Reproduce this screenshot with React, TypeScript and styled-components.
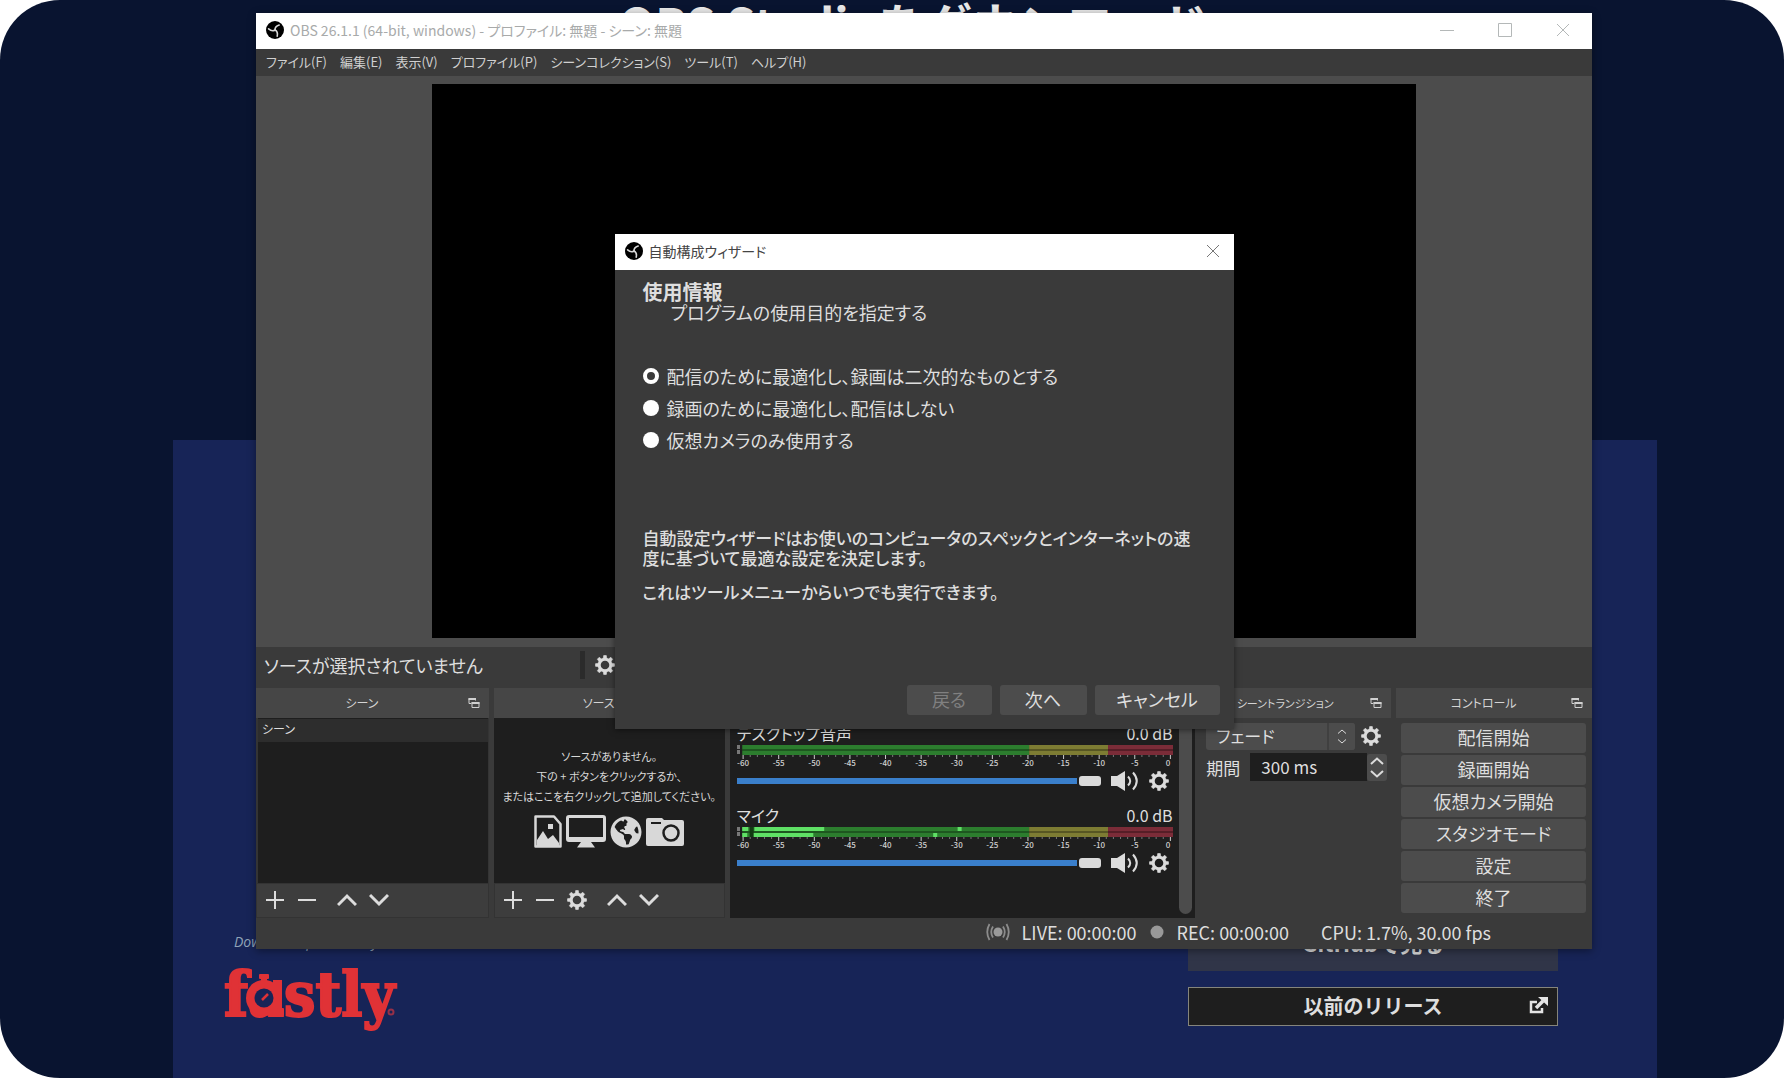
import React, { useState } from "react";
import styled, { createGlobalStyle, css } from "styled-components";
import { FaGlobeAmericas } from "react-icons/fa";

const c = {
  night: "#091430",
  navy: "#172457",
  chrome: "#3a3a3a",
  raised: "#4c4c4c",
  header: "#464646",
  well: "#1e1e1e",
  text: "#dedede",
  blue: "#3a7fcb",
  fastly: "#e03236",
};

const GlobalStyle = createGlobalStyle`
  * { box-sizing: border-box; }
  body {
    margin: 0;
    background: #fff;
    font-family: "Noto Sans CJK JP", sans-serif;
    font-feature-settings: "palt";
  }
  h1, h2, h3, p, ul, fieldset { margin: 0; padding: 0; border: 0; }
  ul { list-style: none; }
  button, input, select { font: inherit; font-feature-settings: inherit; color: inherit; }
  svg { display: block; flex: none; }
`;

/* ---------- download page behind the windows ---------- */

const Page = styled.div`
  position: relative;
  display: flex;
  flex-direction: column;
  min-height: 100vh;
  overflow: hidden;
  border-radius: 60px;
  background: ${c.night};
  font-feature-settings: normal;
`;

const PageHeader = styled.header`
  height: 440px;
  text-align: center;
`;

const PageTitle = styled.h1`
  padding-left: 42px;
  font-size: 47px;
  line-height: 46px;
  color: #e8e8e8;
`;

const DownloadPanel = styled.section`
  flex: 1;
  display: flex;
  justify-content: space-between;
  align-items: flex-end;
  margin: 0 127px 0 173px;
  padding: 0 99px 52px 51px;
  background: ${c.navy};
`;

const Sponsor = styled.div`
  display: flex;
  flex-direction: column;
  gap: 12px;
`;

const SponsorNote = styled.a`
  padding-left: 10px;
  font: italic 14px/20px "Open Sans", sans-serif;
  color: #8fa3b8;
  text-decoration: none;
`;

const SponsorLogo = styled.div`
  position: relative;
  width: 180px;
  font: bold 62px/62px "DejaVu Serif Condensed", "DejaVu Serif", serif;
  color: ${c.fastly};
  -webkit-text-stroke: 2px ${c.fastly};
  svg {
    position: absolute;
    left: 0;
    top: 10px;
  }
`;

const Links = styled.div`
  display: flex;
  flex-direction: column;
  gap: 16px;
  width: 370px;
`;

const LinkButton = styled.a<{ $dim?: boolean }>`
  display: grid;
  grid-template-columns: 24px 1fr 24px;
  align-items: center;
  height: ${(p) => (p.$dim ? 56 : 39)}px;
  padding: 0 4px 2px;
  border: 1px solid ${(p) => (p.$dim ? "#303548" : "#85857c")};
  background: ${(p) => (p.$dim ? "#303548" : c.well)};
  font-size: ${(p) => (p.$dim ? 22 : 20)}px;
  font-weight: 700;
  line-height: 28px;
  text-align: center;
  color: ${c.text};
  text-decoration: none;
  span { grid-column: 2; }
`;

/* ---------- window chrome ---------- */

const AppWindow = styled.main`
  position: absolute;
  top: 13px;
  left: 256px;
  right: 192px;
  display: flex;
  flex-direction: column;
  background: ${c.chrome};
  color: ${c.text};
  font-feature-settings: "palt";
  box-shadow: 0 2px 8px rgba(0, 0, 0, 0.4);
`;

const TitleBar = styled.header<{ $active?: boolean }>`
  display: flex;
  align-items: center;
  gap: 6px;
  height: 36px;
  padding: 0 13px 2px 10px;
  background: #fff;
  color: ${(p) => (p.$active ? "#444" : "#a8aaaa")};
`;

const TitleText = styled.h2`
  flex: 1;
  font-size: 14px;
  font-weight: 400;
  line-height: 20px;
`;

const CaptionButtons = styled.div`
  display: flex;
  gap: 26px;
  align-items: center;
`;

const IconButton = styled.button<{ $w?: number }>`
  display: grid;
  place-items: center;
  width: ${(p) => p.$w ?? 32}px;
  height: 32px;
  padding: 0;
  border: 0;
  background: none;
`;

const MenuBar = styled.nav`
  display: flex;
  align-items: center;
  gap: 13px;
  height: 27px;
  padding: 0 10px 2px;
`;

const MenuItem = styled.button`
  padding: 0;
  border: 0;
  background: none;
  font-size: 13px;
  line-height: 20px;
  color: #d0d0d0;
  white-space: nowrap;
`;

const Preview = styled.section`
  display: flex;
  justify-content: center;
  padding: 8px 0 9px;
  background: ${c.raised};
`;

const Canvas = styled.div`
  height: 554px;
  aspect-ratio: 16 / 9;
  background: #000;
`;

const SourceBar = styled.div`
  display: flex;
  align-items: center;
  height: 41px;
  padding: 0 8px 5px;
  font-size: 18px;
  line-height: 24px;
  p { width: 316px; }
`;

const Divider = styled.i`
  width: 5px;
  height: 28px;
  margin-right: 4px;
  background: #2b2b2b;
`;

/* ---------- docks ---------- */

const Docks = styled.div`
  display: grid;
  grid-template-columns: 233fr 231fr 466fr 191fr 196fr;
  gap: 5px;
  height: 230px;
`;

const Dock = styled.section`
  display: flex;
  flex-direction: column;
  min-width: 0;
`;

const DockHeader = styled.header<{ $compact?: boolean }>`
  display: flex;
  align-items: center;
  height: 30px;
  padding: 0 9px 0 0;
  background: ${c.header};
  h3 {
    flex: 1;
    font-size: ${(p) => (p.$compact ? 11 : 12)}px;
    font-weight: 400;
    line-height: 20px;
    text-align: center;
    white-space: nowrap;
    color: #d4d4d4;
  }
`;

const List = styled.ul`
  flex: 1;
  padding-top: 1px;
  background: ${c.well};
  border: 0 solid #343434;
  border-width: 0 1px 0 2px;
`;

const ListItem = styled.li`
  height: 23px;
  padding-left: 4px;
  background: #2d2d2d;
  font-size: 12px;
  line-height: 20px;
`;

const EmptyNote = styled.div`
  flex: 1;
  display: flex;
  flex-direction: column;
  align-items: center;
  gap: 9px;
  padding-top: 28px;
  background: ${c.well};
  font-size: 11px;
  line-height: 20px;
  text-align: center;
  white-space: nowrap;
  color: #d8d8d8;
`;

const SourceKinds = styled.div`
  display: flex;
  align-items: center;
  gap: 4px;
  color: #d8d8d8;
`;

const Tools = styled.div`
  display: flex;
  height: 35px;
  padding: 0 2px;
  border: 1px solid #333;
  background: #3d3d3d;
`;

const Gap = styled.i`
  width: 8px;
`;

const MixerBody = styled.div`
  flex: 1;
  display: flex;
  justify-content: space-between;
  padding: 0 3px 4px 7px;
  background: ${c.well};
`;

const Tracks = styled.div`
  flex: 1;
  max-width: 436px;
  padding-top: 3px;
`;

const Track = styled.div`
  height: 82px;
`;

const TrackHead = styled.div`
  display: flex;
  justify-content: space-between;
  font-size: 16px;
  line-height: 24px;
`;

const TrackFoot = styled.div`
  display: flex;
  align-items: center;
  height: 24px;
`;

const Fader = styled.input`
  flex: 1;
  min-width: 0;
  height: 10px;
  margin: 0 4px 0 0;
  appearance: none;
  background: linear-gradient(${c.blue}, ${c.blue}) 0 50% / calc(100% - 24px) 6px no-repeat;
  &::-webkit-slider-thumb {
    appearance: none;
    width: 22px;
    height: 10px;
    border-radius: 3px;
    background: #dadada;
  }
`;

const ScrollHandle = styled.div`
  width: 13px;
  border-radius: 0 0 7px 7px;
  background: ${c.raised};
`;

const TransitionBody = styled.div`
  display: flex;
  flex-direction: column;
  gap: 3px;
  padding: 4px 4px 0 6px;
  font-size: 17px;
`;

const Row = styled.div`
  display: flex;
  align-items: center;
  height: 28px;
  label { width: 44px; }
`;

const SelectWrap = styled.div`
  flex: 1;
  display: flex;
  min-width: 0;
  height: 27px;
  border-radius: 3px;
  background: ${c.raised};
`;

const Select = styled.select`
  flex: 1;
  min-width: 0;
  padding: 0 10px 2px;
  border: 0;
  border-right: 2px solid #404040;
  appearance: none;
  background: none;
`;

const Stepper = styled.span<{ $w: number }>`
  display: flex;
  flex-direction: column;
  align-items: center;
  justify-content: center;
  gap: 5px;
  width: ${(p) => p.$w}px;
  height: 27px;
  border-radius: 3px;
  background: ${c.raised};
`;

const Duration = styled.input`
  flex: 1;
  min-width: 0;
  height: 28px;
  padding: 0 11px 2px;
  border: 0;
  background: ${c.well};
`;

const Controls = styled.div`
  display: flex;
  flex-direction: column;
  gap: 2px;
  padding: 5px 6px 0 5px;
`;

const buttonLook = css`
  padding: 0 0 2px;
  border: 0;
  border-radius: 3px;
  background: ${c.raised};
  line-height: 24px;
  &:disabled { color: #808080; }
`;

const ControlButton = styled.button`
  ${buttonLook}
  height: 30px;
  font-size: 18px;
`;

const StatusBar = styled.footer`
  display: flex;
  align-items: center;
  justify-content: flex-end;
  gap: 12px;
  height: 31px;
  padding: 0 101px 3px 0;
  font-size: 18px;
  line-height: 24px;
  white-space: nowrap;
  span:last-child { margin-left: 20px; }
`;

/* ---------- wizard ---------- */

const Overlay = styled.div`
  position: absolute;
  inset: 0;
  display: grid;
  place-items: center;
`;

const Dialog = styled.form`
  display: flex;
  flex-direction: column;
  width: 619px;
  height: 495px;
  background: ${c.chrome};
  box-shadow: 0 1px 6px rgba(0, 0, 0, 0.5);
`;

const DialogBody = styled.div`
  flex: 1;
  padding: 12px 28px 0;
  font-size: 18px;
  line-height: 20px;
`;

const DialogTitle = styled.h3`
  font-size: 20px;
  line-height: 20px;
`;

const Lead = styled.p`
  padding-left: 28px;
`;

const Choices = styled.fieldset`
  display: flex;
  flex-direction: column;
  margin: 38px 0 72px;
`;

const Choice = styled.label`
  display: flex;
  align-items: center;
  gap: 8px;
  height: 32px;
`;

const Radio = styled.input`
  appearance: none;
  width: 16px;
  height: 16px;
  margin: 0;
  border-radius: 50%;
  background: #fff;
  &:checked {
    border: 4px solid #fff;
    background: ${c.chrome};
  }
`;

const Explain = styled.p`
  margin-bottom: 14px;
  font-size: 17px;
  font-weight: 500;
  white-space: nowrap;
`;

const DialogFooter = styled.footer`
  display: flex;
  justify-content: flex-end;
  gap: 8px;
  padding: 0 14px 14px;
`;

const DialogButton = styled.button<{ $w: number }>`
  ${buttonLook}
  width: ${(p) => p.$w}px;
  height: 30px;
  font-size: 18px;
`;

/* ---------- icons ---------- */

const ObsLogo = () => (
  <svg width="18" height="18" viewBox="0 0 18 18">
    <circle cx="9" cy="9" r="9" fill="#000" />
    {[0, 120, 240].map((a) => (
      <path key={a} d="M9 9Q6.500 6.500 9 2.500" fill="none" stroke="#d8d8d8" strokeWidth="1.600" strokeLinecap="round" transform={`rotate(${a + 40} 9 9)`} />
    ))}
  </svg>
);

const Gear = ({ size = 20 }: { size?: number }) => (
  <svg width={size} height={size} viewBox="0 0 20 20" fill="none" stroke="#dcdcdc">
    <circle cx="10" cy="10" r="5.8" strokeWidth="3" />
    {[0, 45, 90, 135, 180, 225, 270, 315].map((a) => (
      <path key={a} d="M8.200 3.6 L8.700 .5 H11.300 L11.800 3.6Z" fill="#dcdcdc" strokeWidth=".6" transform={`rotate(${a} 10 10)`} />
    ))}
  </svg>
);

const Stroke = ({ d, w = 20, h = 20, color = "#dcdcdc", sw = 2 }: { d: string; w?: number; h?: number; color?: string; sw?: number }) => (
  <svg width={w} height={h} viewBox={`0 0 ${w} ${h}`} fill="none" stroke={color} strokeWidth={sw}>
    <path d={d} />
  </svg>
);

const Plus = () => <Stroke d="M10 1V19M1 10H19" />;
const Minus = () => <Stroke d="M1 10H19" />;
const Up = () => <Stroke d="M1 15 L10 6 L19 15" sw={3} />;
const Down = () => <Stroke d="M1 5 L10 14 L19 5" sw={3} />;

const PopOut = () => (
  <svg width="12" height="12" viewBox="0 0 12 12" fill="none" stroke="#d0d0d0">
    <path d="M3 6.500H1V1.500H7.500V3.500" />
    <path d="M.5 2H8" strokeWidth="2" />
    <path d="M4 5.500H11V10.500H4Z" />
    <path d="M3.500 6H11.500" strokeWidth="2" />
  </svg>
);

const Speaker = () => (
  <svg width="28" height="20" viewBox="0 0 28 20" fill="none" stroke="#dcdcdc" strokeWidth="2">
    <path d="M0 5H6L14 0V20L6 15H0Z" fill="#dcdcdc" stroke="none" />
    <path d="M17 5.500Q21.500 10 17 14.500M22 1.500Q29.500 10 22 18.500" />
  </svg>
);

const ImageIcon = () => (
  <svg width="28" height="33" viewBox="0 0 28 33">
    <path d="M1.500 1.500H20L26.500 9V31.500H1.500Z" fill="none" stroke="currentColor" strokeWidth="2.500" strokeLinejoin="round" />
    <path d="M3 29V25L9 16L14 24L19 20L25 28V31H3Z" fill="currentColor" />
    <rect x="14" y="9" width="5" height="5" fill="currentColor" />
  </svg>
);

const MonitorIcon = () => (
  <svg width="40" height="33" viewBox="0 0 40 33">
    <path d="M3 0H37Q40 0 40 3V24Q40 27 37 27H25L29 32.500H11L15 27H3Q0 27 0 24V3Q0 0 3 0ZM3 3V22H37V3Z" fill="currentColor" fillRule="evenodd" />
  </svg>
);

const CameraIcon = () => (
  <svg width="38" height="29" viewBox="0 0 38 29">
    <path d="M2 1H16L18 3H36Q38 3 38 5V27Q38 29 36 29H2Q0 29 0 27V3Q0 1 2 1Z" fill="currentColor" />
    <path d="M5 6H15" stroke={c.well} strokeWidth="2" />
    <circle cx="25" cy="16" r="7.500" fill="none" stroke={c.well} strokeWidth="2.500" />
  </svg>
);

const ExternalIcon = () => (
  <svg width="19" height="17" viewBox="0 0 19 17" fill="none" stroke="#e4e4e4" strokeWidth="2.500">
    <path d="M8 5H2V15H13V11" />
    <path d="M7 11L14 4" strokeWidth="3.500" />
    <path d="M9 0H19V9Z" fill="#e4e4e4" stroke="none" />
  </svg>
);

const LiveIcon = () => (
  <svg width="24" height="18" viewBox="0 0 24 18" fill="none" stroke="#8c8c8c" strokeWidth="1.800">
    <circle cx="12" cy="9" r="4.500" fill="#9a9a9a" stroke="none" />
    <path d="M7 3.500Q3.500 9 7 14.500M17 3.500Q20.500 9 17 14.500M3.500 1Q-1 9 3.500 17M20.500 1Q25 9 20.500 17" />
  </svg>
);

/* Stopwatch drawn over the "a" of the logo, and the small mark after the "y". */
const Stopwatch = () => (
  <svg width="180" height="56" viewBox="0 0 180 56" fill={c.fastly}>
    <rect x="35" y="0" width="10" height="5" rx="1" />
    <rect x="37" y="4" width="6" height="8" />
    <circle cx="40" cy="24" r="18" />
    <rect x="49" y="6" width="9" height="36" />
    <rect x="53" y="34" width="7" height="8" rx="1" />
    <circle cx="40" cy="24" r="9.500" fill={c.navy} />
    <path d="M38 26L44 20" stroke={c.fastly} strokeWidth="2.500" />
    <circle cx="167" cy="38" r="2.500" fill="none" stroke="#963048" strokeWidth="2" />
  </svg>
);

/* Level meter: zones, tick marks and dB scale, with optional live level bars. */
const Meter = ({ live }: { live?: boolean }) => {
  const at = (db: number) => `${1.4 + ((60 + db) / 60) * 98}%`;
  const ticks = Array.from({ length: 61 }, (_, i) => i - 60);
  return (
    <svg width="100%" height="24" role="img" aria-label="dB">
      <rect x="0" y="0" width="3" height="4" fill="#777" />
      <rect x="0" y="5" width="3" height="4" fill="#777" />
      <rect x="1.2%" width="65.8%" height="10" fill="#2c7d2e" />
      <rect x="67%" width="18.100%" height="10" fill="#7d7c33" />
      <rect x="85.100%" width="14.900%" height="10" fill="#7b2c38" />
      <rect x="1.2%" y="4" width="98.800%" height="2" fill="#000" opacity=".3" />
      {live && (
        <g fill="#5fe065">
          <rect x="1.2%" y="0" width="6" height="4" />
          <rect x="4%" y="0" width="16%" height="4" />
          <rect x="1.2%" y="6" width="5" height="4" />
          <rect x="3.500%" y="6" width="14%" height="4" />
          <rect x="50.600%" y="0" width="4" height="4" />
          <rect x="45%" y="6" width="4" height="4" />
          <rect x="2.900%" y="0" width="4" height="10" fill="#123a12" />
        </g>
      )}
      {ticks.map((t) => (
        <line key={t} x1={at(t)} x2={at(t)} y1="10" y2={t % 5 ? 12 : 14} stroke={t % 5 ? "#777" : "#ccc"} />
      ))}
      {ticks
        .filter((t) => t % 5 === 0)
        .map((t) => (
          <text key={t} x={at(t)} y="21" fontSize="8" fontWeight="500" fill="#d0d0d0" textAnchor={t === 0 ? "end" : "middle"}>
            {t}
          </text>
        ))}
    </svg>
  );
};

const menus = ["ファイル(F)", "編集(E)", "表示(V)", "プロファイル(P)", "シーンコレクション(S)", "ツール(T)", "ヘルプ(H)"];
const actions = ["配信開始", "録画開始", "仮想カメラ開始", "スタジオモード", "設定", "終了"];
const choices = ["配信のために最適化し、録画は二次的なものとする", "録画のために最適化し、配信はしない", "仮想カメラのみ使用する"];

const Header = ({ title, compact }: { title: string; compact?: boolean }) => (
  <DockHeader $compact={compact}>
    <h3>{title}</h3>
    <PopOut />
  </DockHeader>
);

const MixerTrack = ({ name, live }: { name: string; live?: boolean }) => (
  <Track>
    <TrackHead>
      <span>{name}</span>
      <span>0.0 dB</span>
    </TrackHead>
    <Meter live={live} />
    <TrackFoot>
      <Fader type="range" aria-label={name} min={0} max={100} defaultValue={100} />
      <IconButton type="button" aria-label="ミュート" $w={40}><Speaker /></IconButton>
      <IconButton type="button" aria-label="設定" $w={28}><Gear /></IconButton>
    </TrackFoot>
  </Track>
);

export default function App() {
  const [choice, setChoice] = useState(0);
  return (
    <Page>
      <GlobalStyle />
      <PageHeader>
        <PageTitle>OBS Studioをダウンロード</PageTitle>
      </PageHeader>
      <DownloadPanel>
        <Sponsor>
          <SponsorNote href="#fastly">Downloads powered by</SponsorNote>
          <SponsorLogo>
            fastly
            <Stopwatch />
          </SponsorLogo>
        </Sponsor>
        <Links>
          <LinkButton href="#github" $dim><span>GitHubで見る</span></LinkButton>
          <LinkButton href="#releases"><span>以前のリリース</span><ExternalIcon /></LinkButton>
        </Links>
      </DownloadPanel>

      <AppWindow>
        <TitleBar>
          <ObsLogo />
          <TitleText>OBS 26.1.1 (64-bit, windows) - プロファイル: 無題 - シーン: 無題</TitleText>
          <CaptionButtons>
            <IconButton type="button" aria-label="最小化"><Stroke w={14} h={14} d="M0 7.500H14" color="#b4b8b8" sw={1} /></IconButton>
            <IconButton type="button" aria-label="最大化"><Stroke w={14} h={14} d="M.5 .5H13.500V13.500H.5Z" color="#b4b8b8" sw={1} /></IconButton>
            <IconButton type="button" aria-label="閉じる"><Stroke w={14} h={14} d="M1 1L13 13M13 1L1 13" color="#b4b8b8" sw={1} /></IconButton>
          </CaptionButtons>
        </TitleBar>
        <MenuBar>
          {menus.map((m) => <MenuItem key={m} type="button">{m}</MenuItem>)}
        </MenuBar>
        <Preview><Canvas /></Preview>
        <SourceBar>
          <p>ソースが選択されていません</p>
          <Divider />
          <IconButton type="button" aria-label="プロパティ"><Gear /></IconButton>
        </SourceBar>

        <Docks>
          <Dock>
            <Header title="シーン" />
            <List><ListItem>シーン</ListItem></List>
            <Tools>
              <IconButton type="button" aria-label="追加"><Plus /></IconButton>
              <IconButton type="button" aria-label="削除"><Minus /></IconButton>
              <Gap />
              <IconButton type="button" aria-label="上へ"><Up /></IconButton>
              <IconButton type="button" aria-label="下へ"><Down /></IconButton>
            </Tools>
          </Dock>
          <Dock>
            <Header title="ソース" />
            <EmptyNote>
              <p>ソースがありません。<br />下の + ボタンをクリックするか、<br />またはここを右クリックして追加してください。</p>
              <SourceKinds>
                <ImageIcon />
                <MonitorIcon />
                <FaGlobeAmericas size={32} />
                <CameraIcon />
              </SourceKinds>
            </EmptyNote>
            <Tools>
              <IconButton type="button" aria-label="追加"><Plus /></IconButton>
              <IconButton type="button" aria-label="削除"><Minus /></IconButton>
              <IconButton type="button" aria-label="プロパティ"><Gear /></IconButton>
              <Gap />
              <IconButton type="button" aria-label="上へ"><Up /></IconButton>
              <IconButton type="button" aria-label="下へ"><Down /></IconButton>
            </Tools>
          </Dock>
          <Dock>
            <Header title="音声ミキサー" />
            <MixerBody>
              <Tracks>
                <MixerTrack name="デスクトップ音声" />
                <MixerTrack name="マイク" live />
              </Tracks>
              <ScrollHandle />
            </MixerBody>
          </Dock>
          <Dock>
            <Header title="シーントランジション" compact />
            <TransitionBody>
              <Row>
                <SelectWrap>
                  <Select aria-label="トランジション"><option>フェード</option></Select>
                  <Stepper $w={26}>
                    <Stroke w={8} h={5} d="M0 4.500L4 1L8 4.500" sw={1} />
                    <Stroke w={8} h={5} d="M0 .5L4 4L8 .5" sw={1} />
                  </Stepper>
                </SelectWrap>
                <IconButton type="button" aria-label="設定"><Gear /></IconButton>
              </Row>
              <Row>
                <label htmlFor="duration">期間</label>
                <Duration id="duration" defaultValue="300 ms" />
                <Stepper $w={20}>
                  <Stroke w={14} h={8} d="M1 7L7 1.500L13 7" />
                  <Stroke w={14} h={8} d="M1 1L7 6.500L13 1" />
                </Stepper>
              </Row>
            </TransitionBody>
          </Dock>
          <Dock>
            <Header title="コントロール" />
            <Controls>
              {actions.map((a) => <ControlButton key={a} type="button">{a}</ControlButton>)}
            </Controls>
          </Dock>
        </Docks>

        <StatusBar>
          <LiveIcon />
          <span>LIVE: 00:00:00</span>
          <svg width="16" height="16" viewBox="0 0 16 16"><circle cx="8" cy="8" r="6.500" fill="#999" /></svg>
          <span>REC: 00:00:00</span>
          <span>CPU: 1.7%, 30.00 fps</span>
        </StatusBar>

        <Overlay>
          <Dialog onSubmit={(e) => e.preventDefault()}>
            <TitleBar $active>
              <ObsLogo />
              <TitleText>自動構成ウィザード</TitleText>
              <IconButton type="button" aria-label="閉じる" $w={16}><Stroke w={14} h={14} d="M1 1L13 13M13 1L1 13" color="#777" sw={1} /></IconButton>
            </TitleBar>
            <DialogBody>
              <DialogTitle>使用情報</DialogTitle>
              <Lead>プログラムの使用目的を指定する</Lead>
              <Choices>
                {choices.map((label, i) => (
                  <Choice key={label}>
                    <Radio type="radio" name="usage" checked={choice === i} onChange={() => setChoice(i)} />
                    {label}
                  </Choice>
                ))}
              </Choices>
              <Explain>自動設定ウィザードはお使いのコンピュータのスペックとインターネットの速<br />度に基づいて最適な設定を決定します。</Explain>
              <Explain>これはツールメニューからいつでも実行できます。</Explain>
            </DialogBody>
            <DialogFooter>
              <DialogButton $w={85} type="button" disabled>戻る</DialogButton>
              <DialogButton $w={87} type="submit">次へ</DialogButton>
              <DialogButton $w={125} type="button">キャンセル</DialogButton>
            </DialogFooter>
          </Dialog>
        </Overlay>
      </AppWindow>
    </Page>
  );
}
